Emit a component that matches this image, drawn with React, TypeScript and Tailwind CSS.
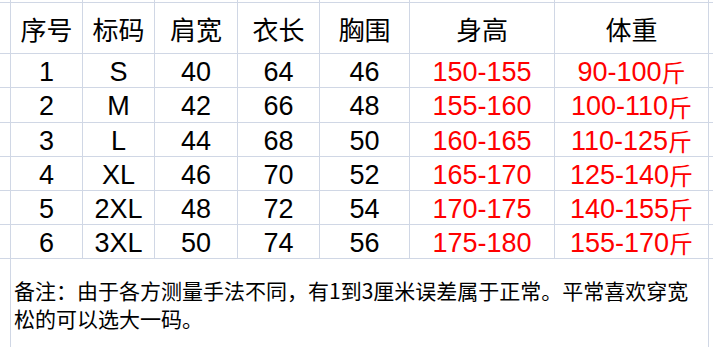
import React from "react";

const W = [
  "w-[11px]",
  "w-[72px]",
  "w-[72px]",
  "w-[83px]",
  "w-[82px]",
  "w-[90px]",
  "w-[145px]",
  "w-[154px]",
];

const headers = ["序号", "标码", "肩宽", "衣长", "胸围", "身高", "体重"];

const rows: [string, string, string, string, string, string, string][] = [
  ["1", "S", "40", "64", "46", "150-155", "90-100"],
  ["2", "M", "42", "66", "48", "155-160", "100-110"],
  ["3", "L", "44", "68", "50", "160-165", "110-125"],
  ["4", "XL", "46", "70", "52", "165-170", "125-140"],
  ["5", "2XL", "48", "72", "54", "170-175", "140-155"],
  ["6", "3XL", "50", "74", "56", "175-180", "155-170"],
];

const rowH = ["h-[34px]", "h-[35px]", "h-[34px]", "h-[34px]", "h-[34px]", "h-[34px]"];

const cellBase =
  "shrink-0 h-full border-r border-[#d0d7e5] flex items-center justify-center whitespace-nowrap";

function Row({ h, children }: { h: string; children?: React.ReactNode }) {
  return (
    <div className={`flex w-full border-b border-[#d0d7e5] ${h}`}>{children}</div>
  );
}

export default function App() {
  return (
    <div className="w-[713px] h-[347px] bg-white overflow-hidden flex flex-col text-black">
      <Row h="h-[3px]">
        {W.map((w, i) => (
          <div key={i} className={`${w} ${cellBase}`} />
        ))}
      </Row>
      <Row h="h-[51px]">
        <div className={`${W[0]} ${cellBase}`} />
        {headers.map((t, i) => (
          <div
            key={i}
            className={`${W[i + 1]} ${cellBase} pt-[2px] font-['Noto_Sans_CJK_SC',sans-serif] text-[26px] leading-none`}
          >
            {t}
          </div>
        ))}
      </Row>
      {rows.map((r, ri) => (
        <Row key={ri} h={rowH[ri]}>
          <div className={`${W[0]} ${cellBase}`} />
          {r.map((t, i) => (
            <div
              key={i}
              className={`${W[i + 1]} ${cellBase} pt-[3px] font-['Liberation_Sans','Noto_Sans_CJK_SC',sans-serif] text-[27px] leading-none ${
                i >= 5 ? "text-[#ff0000]" : "text-black"
              }`}
            >
              {t}
              {i === 6 && (
                <span className="font-['Noto_Sans_CJK_SC',sans-serif] text-[24px] leading-none">斤</span>
              )}
            </div>
          ))}
        </Row>
      ))}
      <div className="flex w-full flex-1">
        <div className={`${W[0]} shrink-0 h-full border-r border-[#d0d7e5]`} />
        <div className="w-[698px] shrink-0 h-full border-r border-[#d0d7e5] pl-[3px] pt-[17px] font-['Noto_Sans_CJK_SC',sans-serif] text-[21px] leading-[28px] whitespace-nowrap">
          备注：由于各方测量手法不同，有1到3厘米误差属于正常。平常喜欢穿宽
          <br />
          松的可以选大一码。
        </div>
      </div>
    </div>
  );
}
